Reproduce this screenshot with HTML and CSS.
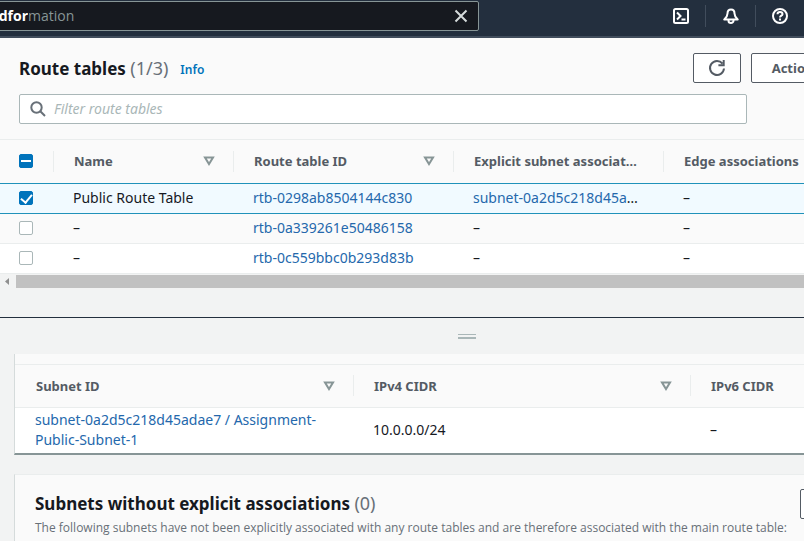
FILE: index.html
```html
<!DOCTYPE html>
<html lang="en">
<head>
<meta charset="utf-8">
<title>Route tables</title>
<link rel="stylesheet" href="styles.css">
</head>
<body>
<header class="topbar">
  <div class="search">
    <input class="search-input" type="text" value="cloudfor" aria-label="Search services">
    <span class="search-hint">mation</span>
    <button class="search-clear" aria-label="Clear search">
      <svg width="14" height="14" viewBox="0 0 14 14" fill="none" stroke="currentColor" stroke-width="2"><path d="M1.500 1.500 12.500 12.500M12.500 1.500 1.500 12.500"/></svg>
    </button>
  </div>
  <nav class="tools" aria-label="Tools">
    <button class="tool" aria-label="CloudShell">
      <svg width="16" height="16" viewBox="0 0 16 16" fill="none" stroke="currentColor" stroke-width="2"><rect x="1" y="1" width="14" height="14" rx="1.500"/><path d="M4 4.500 7.500 8 4 11.500M8.500 11.500h4"/></svg>
    </button>
    <button class="tool" aria-label="Notifications">
      <svg width="16" height="16" viewBox="0 0 16 16" fill="none" stroke="currentColor" stroke-width="2" stroke-linejoin="round"><path d="M8 1.500C5.500 1.500 4.500 3.300 4.500 5.500 4.500 8 3.500 9.500 1.300 11.500H14.700C12.500 9.500 11.500 8 11.500 5.500 11.500 3.300 10.500 1.500 8 1.500ZM5.500 12v.8a2.500 2.200 0 0 0 5 0V12"/></svg>
    </button>
    <button class="tool" aria-label="Help">
      <svg width="16" height="16" viewBox="0 0 16 16" fill="none" stroke="currentColor" stroke-width="2"><circle cx="8" cy="8" r="7"/><path d="M5.500 6.300C5.500 4.800 6.500 4.100 8 4.100S10.500 5 10.500 6.200C10.500 7.700 8 7.700 8 9.600M8 10.600v2"/></svg>
    </button>
  </nav>
</header>

<main>
  <section class="routes">
    <div class="routes-head">
      <div class="title-row">
        <h1 class="title">Route tables <span class="count">(1/3)</span></h1>
        <a class="info" href="#info">Info</a>
        <div class="actions">
          <button class="btn btn-icon" aria-label="Refresh">
            <svg width="18" height="18" viewBox="0 0 18 18" fill="none" stroke="currentColor" stroke-width="2"><path d="M16 9.500A7 7 0 1 1 14.500 4.600M15.700 1v5.300H10.400"/></svg>
          </button>
          <button class="btn">Actions</button>
        </div>
      </div>
      <label class="filter">
        <svg width="16" height="16" viewBox="0 0 16 16" fill="none" stroke="currentColor" stroke-width="2"><circle cx="6.500" cy="6.500" r="5.200"/><path d="M10.300 10.300 15 15"/></svg>
        <input type="text" placeholder="Filter route tables" aria-label="Filter route tables">
      </label>
    </div>
    <table class="grid routes-table">
      <colgroup><col class="c-check"><col class="c-name"><col class="c-id"><col class="c-subnet"><col class="c-edge"></colgroup>
      <thead>
        <tr>
          <th><span class="cell"><input type="checkbox" class="check mixed" aria-label="Select all"></span></th>
          <th><span class="cell">Name <svg class="sort" width="12" height="10" viewBox="0 0 12 10"><path d="M2 1.500H10L6 8Z"/></svg></span></th>
          <th><span class="cell">Route table ID <svg class="sort" width="12" height="10" viewBox="0 0 12 10"><path d="M2 1.500H10L6 8Z"/></svg></span></th>
          <th><span class="cell"><span class="clip">Explicit subnet associations</span></span></th>
          <th><span class="cell">Edge associations</span></th>
        </tr>
      </thead>
      <tbody>
        <tr class="selected">
          <td><input type="checkbox" class="check" aria-label="Select Public Route Table" checked></td>
          <td>Public Route Table</td>
          <td><a href="#rtb1">rtb-0298ab8504144c830</a></td>
          <td><div class="clip"><a href="#subnet">subnet-0a2d5c218d45adae7</a></div></td>
          <td>–</td>
        </tr>
        <tr class="shaded">
          <td><input type="checkbox" class="check" aria-label="Select rtb-0a339261e50486158"></td>
          <td>–</td>
          <td><a href="#rtb2">rtb-0a339261e50486158</a></td>
          <td>–</td>
          <td>–</td>
        </tr>
        <tr>
          <td><input type="checkbox" class="check" aria-label="Select rtb-0c559bbc0b293d83b"></td>
          <td>–</td>
          <td><a href="#rtb3">rtb-0c559bbc0b293d83b</a></td>
          <td>–</td>
          <td>–</td>
        </tr>
      </tbody>
    </table>
    <div class="scrollbar">
      <svg width="16" height="13" viewBox="0 0 16 13"><path d="M9 3v7L5 6.500Z" fill="#8f8f8f"/></svg>
      <div class="thumb"></div>
    </div>
  </section>

  <section class="details">
    <div class="handle"></div>
    <div class="card card-cut">
      <table class="grid subnets-table">
        <colgroup><col class="s-id"><col class="s-v4"><col class="s-v6"></colgroup>
        <thead>
          <tr>
            <th><span class="cell">Subnet ID <svg class="sort" width="12" height="10" viewBox="0 0 12 10"><path d="M2 1.500H10L6 8Z"/></svg></span></th>
            <th><span class="cell">IPv4 CIDR <svg class="sort" width="12" height="10" viewBox="0 0 12 10"><path d="M2 1.500H10L6 8Z"/></svg></span></th>
            <th><span class="cell">IPv6 CIDR</span></th>
          </tr>
        </thead>
        <tbody>
          <tr>
            <td><a href="#subnet">subnet-0a2d5c218d45adae7 / Assignment-<wbr>Public-Subnet-1</a></td>
            <td>10.0.0.0/24</td>
            <td>–</td>
          </tr>
        </tbody>
      </table>
    </div>
    <div class="card card-head">
      <div>
        <h2 class="title">Subnets without explicit associations <span class="count">(0)</span></h2>
        <p class="note">The following subnets have not been explicitly associated with any route tables and are therefore associated with the main route table:</p>
      </div>
      <button class="btn">Edit</button>
    </div>
  </section>
</main>
</body>
</html>
```
FILE: styles.css
```css
* { box-sizing: border-box; }

body {
  margin: 0;
  min-height: 100vh;
  overflow: hidden;
  background: #f2f3f3;
  color: #16191f;
  font: 14px/20px "Noto Sans", "Open Sans", sans-serif;
}

button, input { font: inherit; }
button { cursor: pointer; }
a { color: #2468ac; text-decoration: none; }

.topbar {
  display: flex;
  justify-content: space-between;
  height: 38px;
  padding-top: 1px;
  background: #232f3e;
  border-bottom: 2px solid #414d5c;
  color: #fff;
  font-family: "Open Sans", sans-serif;
}
.search {
  display: flex;
  align-items: center;
  flex: 0 1 540px;
  height: 30px;
  margin-left: -61px;
  background: #16191f;
  border: 1px solid #879596;
  border-radius: 2px;
}
.search-input {
  width: 88px;
  padding: 0;
  border: 0;
  outline: 0;
  background: none;
  color: #fff;
  font-weight: 700;
  text-align: right;
}
.search-hint { color: #879596; }
.search-clear {
  display: flex;
  margin-left: auto;
  padding: 0 10px;
  border: 0;
  background: none;
  color: #d5dbdb;
}
.tools { display: flex; align-items: center; height: 30px; }
.tool {
  display: flex;
  justify-content: center;
  width: 50px;
  padding: 3px 0;
  border: 0;
  border-left: 1px solid #414d5c;
  background: none;
  color: #fff;
}
.tool:first-child { border-left-color: transparent; }
.tool:last-child { width: 49px; }

.routes-head {
  padding: 15px 0 15px 19px;
  background: #fafafa;
  border-bottom: 1px solid #eaeded;
}
.title-row { display: flex; align-items: center; gap: 12px; height: 30px; }
.title { margin: 0; font-size: 17px; line-height: 22px; font-weight: 700; }
.count { color: #687078; font-size: 18px; font-weight: 400; }
.info { color: #0073bb; font-size: 12px; font-weight: 600; padding-top: 3px; }
.actions { display: flex; gap: 10px; margin-left: auto; margin-right: -37px; }
.btn {
  height: 30px;
  padding: 0 20px;
  background: #fff;
  border: 1px solid #545b64;
  border-radius: 2px;
  color: #545b64;
  font-size: 13px;
  font-weight: 700;
}
.btn-icon { display: flex; align-items: center; justify-content: center; width: 48px; padding: 0; }
.filter {
  display: flex;
  align-items: center;
  gap: 8px;
  height: 30px;
  margin: 11px 57px 0 0;
  padding: 0 10px;
  background: #fff;
  border: 1px solid #aab7b8;
  border-radius: 2px;
  color: #687078;
}
.filter input { flex: 1; padding: 0; border: 0; outline: 0; background: none; }
.filter input::placeholder { color: #aab7b8; font-style: italic; }

.grid { border-collapse: collapse; table-layout: fixed; }
.grid th { height: 43px; padding: 0; background: #fafafa; border-bottom: 1px solid #eaeded; color: #545b64; font-size: 13px; font-weight: 700; text-align: left; }
.grid td { padding: 0 20px; }
.cell {
  display: flex;
  align-items: center;
  justify-content: space-between;
  height: 21px;
  padding: 0 18px 0 20px;
  border-left: 1px solid #eaeded;
  white-space: nowrap;
}
th:first-child .cell { border-left: 0; }
.sort { fill: none; stroke: #879596; stroke-width: 2; }
.clip { overflow: hidden; text-overflow: ellipsis; white-space: nowrap; }
.cell .clip { margin-right: 8px; }

.routes-table { width: calc(100% + 80px); }
.routes-table th { border-bottom: 0; }
.routes-table td { height: 30px; border-bottom: 1px solid #eaeded; background: #fff; }
.routes-table th:first-child .cell,
.routes-table td:first-child { padding-left: 19px; }
.routes-table .shaded td { background: #fafafa; }
.routes-table .selected td { background: #f1faff; border-top: 1px solid #2092ba; border-bottom: 1px solid #2092ba; }
.c-check { width: 53px; }
.c-name { width: 180px; }
.c-id { width: 220px; }
.c-subnet { width: 210px; }

.check {
  appearance: none;
  display: grid;
  place-items: center;
  width: 14px;
  height: 14px;
  margin: 0;
  background: #fff;
  border: 1px solid #aab7b8;
  border-radius: 2px;
}
.check:checked, .mixed { background: #0073bb; border-color: #0073bb; }
.mixed::after { content: ""; width: 10px; height: 2px; background: #fff; }
.check:checked::after {
  content: "";
  width: 5px;
  height: 9px;
  margin-bottom: 2px;
  border: solid #fff;
  border-width: 0 2px 2px 0;
  transform: rotate(40deg);
}

.scrollbar { display: flex; align-items: center; margin-top: 1px; }
.thumb { flex: 1; height: 13px; background: #c1c1c1; }

.details { margin-top: 29px; padding-left: 14px; border-top: 1px solid #232f3e; }
.handle {
  width: 18px;
  height: 5px;
  margin: 16px auto 15px;
  border: solid #aab7b8;
  border-width: 1px 0 2px;
  transform: translateX(58px);
}
.card {
  width: calc(100% + 66px);
  background: #fafafa;
  border: 1px solid #eaeded;
  border-left-color: #d5dbdb;
}
.card-cut { padding-top: 10px; border-top: 0; border-bottom: 2px solid #879596; }
.subnets-table { width: 100%; border-top: 1px solid #eaeded; }
.subnets-table td { height: 46px; background: #fff; }
.s-id { width: 338px; }
.s-v4 { width: 337px; }
.subnets-table th:first-child .cell { padding-left: 21px; }
.card-head {
  display: flex;
  align-items: flex-start;
  justify-content: space-between;
  margin-top: 19px;
  padding: 14px 2px 14px 20px;
}
.card-head .title { padding-top: 3px; }
.note { margin: 4px 0 0; color: #687078; font: 12px/18px "Open Sans", sans-serif; white-space: nowrap; }
```
